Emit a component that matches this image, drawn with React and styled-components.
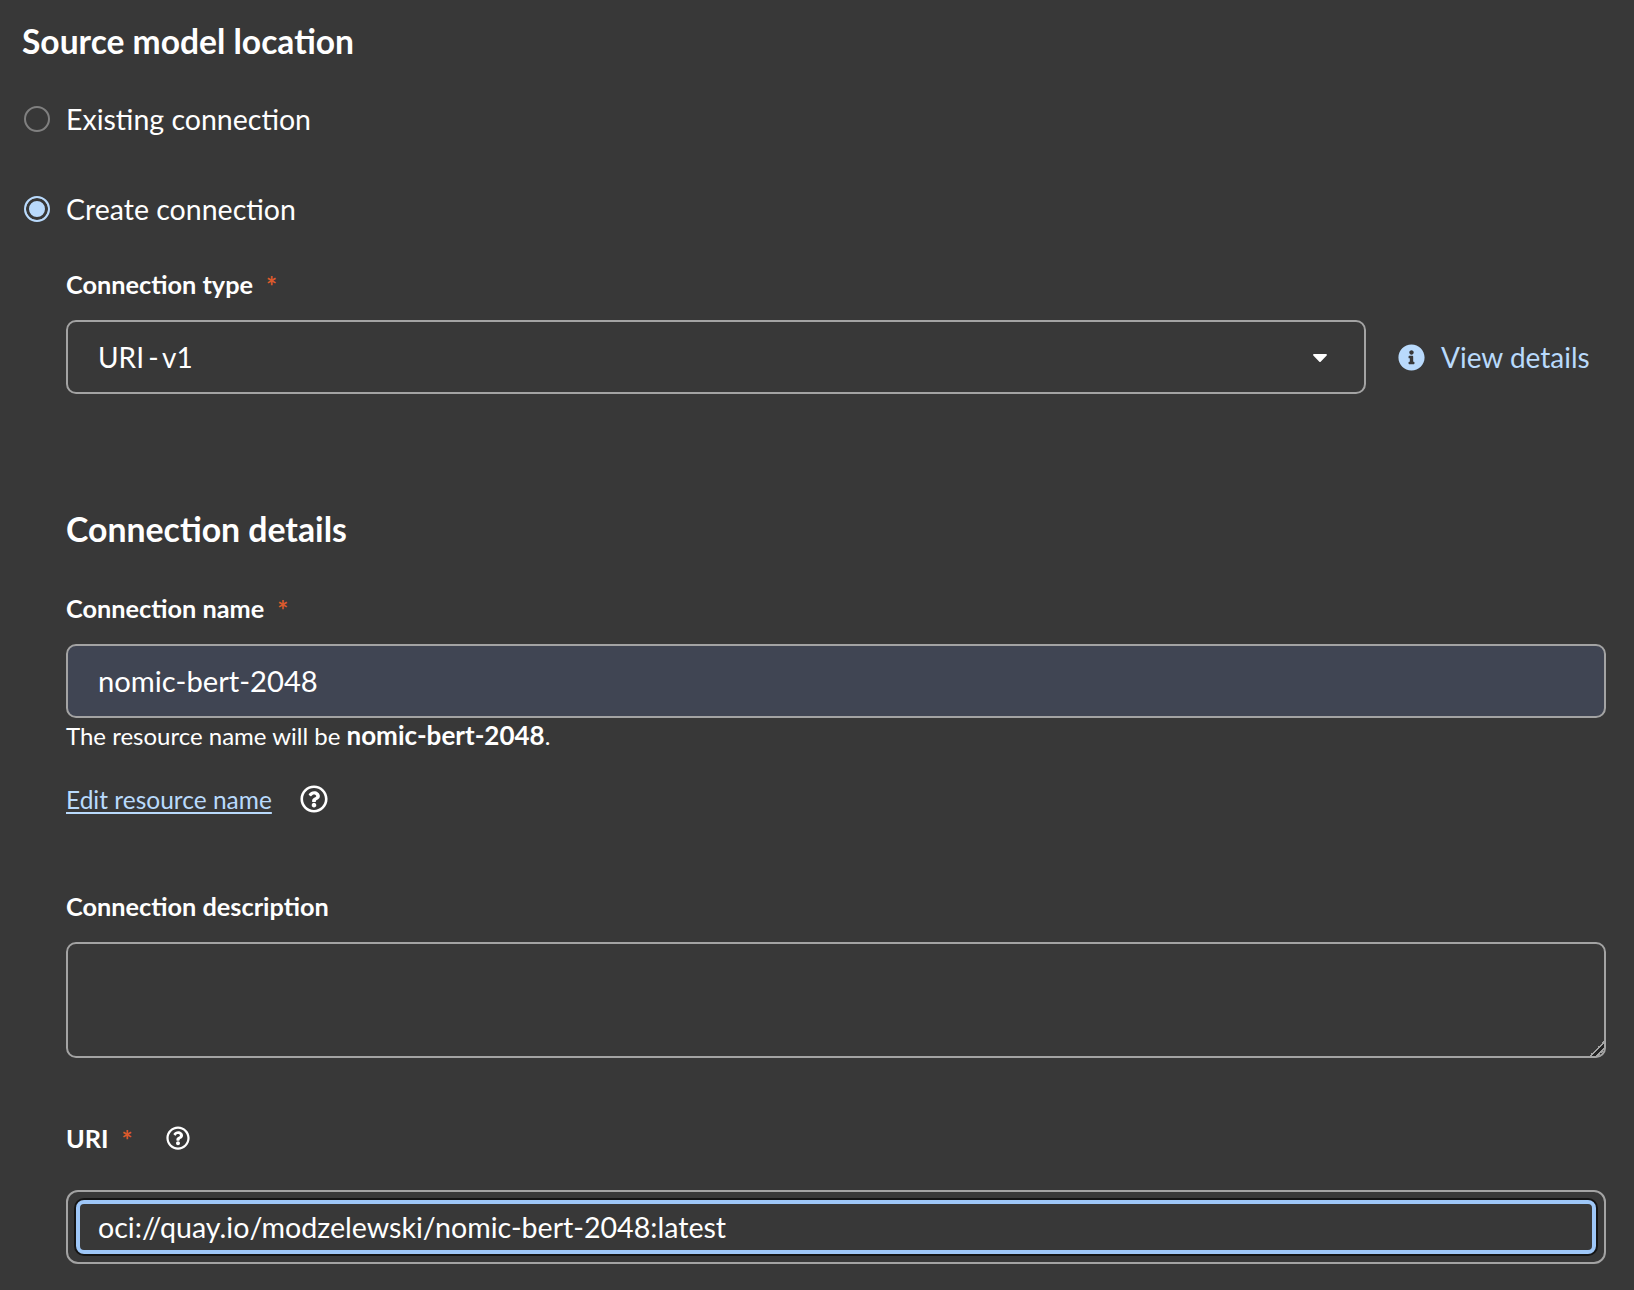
import React from "react";
import styled, { createGlobalStyle } from "styled-components";
import { FaInfoCircle, FaRegQuestionCircle, FaCaretDown } from "react-icons/fa";

const GlobalStyle = createGlobalStyle`
  html, body {
    margin: 0;
    background: #383838;
    color-scheme: dark;
  }
  body {
    font-family: "Lato", "Noto Sans", sans-serif;
    color: #fff;
  }
`;

const Page = styled.div`
  height: 1290px;
  overflow: hidden;
  padding: 19px 28px 0 22px;
  box-sizing: border-box;
`;

const Title = styled.h2`
  margin: 0 0 36px;
  font-size: 33.6px;
  line-height: 44px;
  font-weight: 700;
`;

const RadioRow = styled.label`
  display: flex;
  align-items: center;
  height: 40px;
  gap: 16px;
  font-size: 28.5px;
  margin-bottom: ${(p) => p.$mb || 0}px;
`;

const RadioDot = styled.span`
  width: 26px;
  height: 26px;
  margin-left: 2px;
  box-sizing: border-box;
  border-radius: 50%;
  border: 2px solid ${(p) => (p.$checked ? "#b9dafc" : "#808080")};
  background: ${(p) => (p.$checked ? "#b9dafc" : "transparent")};
  box-shadow: ${(p) => (p.$checked ? "inset 0 0 0 3px #383838" : "none")};
`;

const Indent = styled.div`
  padding-left: 44px;
`;

const Label = styled.div`
  display: flex;
  align-items: center;
  height: 30px;
  font-size: 25.3px;
  font-weight: 700;
  margin-top: ${(p) => p.$mt || 0}px;
  margin-bottom: ${(p) => p.$mb || 0}px;
`;

const Star = styled.span`
  color: #dc5a2c;
  font-size: 26px;
  font-weight: 700;
  margin-left: 13px;
  position: relative;
  top: 2px;
`;

const HelpIcon = styled(FaRegQuestionCircle)`
  font-size: ${(p) => p.$size}px;
  margin-left: ${(p) => p.$ml}px;
  color: #fff;
`;

const SelectRow = styled.div`
  display: flex;
  align-items: center;
  gap: 32px;
`;

const SelectBox = styled.div`
  flex: 0 0 1300px;
  height: 74px;
  box-sizing: border-box;
  display: flex;
  align-items: center;
  justify-content: space-between;
  padding: 0 32px 0 30px;
  border: 2px solid #a3a3a3;
  border-radius: 10px;
  font-size: 28px;
  word-spacing: -3px;
`;

const ViewDetails = styled.a`
  display: flex;
  align-items: center;
  gap: 16px;
  color: #b9dafc;
  font-size: 28px;
  white-space: nowrap;
`;

const Heading = styled.h3`
  margin: 113px 0 0;
  font-size: 33.8px;
  line-height: 44px;
  font-weight: 700;
`;

const TextInput = styled.input`
  display: block;
  width: 100%;
  height: 74px;
  box-sizing: border-box;
  padding: 0 30px 2px;
  border: 2px solid #a3a3a3;
  border-radius: 10px;
  background: #404553;
  color: #fff;
  font: inherit;
  font-size: 29.2px;
  outline: none;
`;

const Helper = styled.div`
  margin-top: 2px;
  height: 30px;
  line-height: 30px;
  font-size: 24px;
  b {
    font-size: 26px;
    font-weight: 700;
  }
`;

const LinkRow = styled.div`
  display: flex;
  align-items: center;
  height: 30px;
  margin-top: 34px;
`;

const EditLink = styled.a`
  color: #b9dafc;
  font-size: 24.5px;
  text-decoration: underline;
  text-underline-offset: 3px;
`;

const TextArea = styled.textarea`
  display: block;
  width: 100%;
  height: 116px;
  box-sizing: border-box;
  padding: 10px 30px;
  border: 2px solid #a3a3a3;
  border-radius: 10px;
  background: transparent;
  color: #fff;
  font: inherit;
  outline: none;

  &::-webkit-resizer {
    background: linear-gradient(
      135deg,
      transparent 50%,
      #a3a3a3 50%,
      #a3a3a3 58%,
      #222 58%,
      #222 72%,
      #a3a3a3 72%,
      #a3a3a3 80%,
      transparent 80%
    );
  }
`;

const FocusWrap = styled.div`
  height: 74px;
  box-sizing: border-box;
  padding: 8px;
  border: 2px solid #a3a3a3;
  border-radius: 12px;
`;

const FocusInput = styled.input`
  display: block;
  width: 100%;
  height: 54px;
  box-sizing: border-box;
  padding: 0 18px;
  border: 4px solid #9ec7f8;
  border-radius: 8px;
  box-shadow: 0 0 0 2px #151515;
  background: #383838;
  color: #fff;
  font: inherit;
  font-size: 28.6px;
  outline: none;
`;

export default function App() {
  return (
    <Page>
      <GlobalStyle />
      <Title>Source model location</Title>
      <RadioRow $mb={50}>
        <RadioDot />
        Existing connection
      </RadioRow>
      <RadioRow>
        <RadioDot $checked />
        Create connection
      </RadioRow>
      <Indent>
        <Label $mt={40} $mb={21}>
          Connection type<Star>*</Star>
        </Label>
        <SelectRow>
          <SelectBox>
            URI - v1
            <FaCaretDown size={24} />
          </SelectBox>
          <ViewDetails>
            <FaInfoCircle size={27} />
            View details
          </ViewDetails>
        </SelectRow>

        <Heading>Connection details</Heading>
        <Label $mt={42} $mb={21}>
          Connection name<Star>*</Star>
        </Label>
        <TextInput readOnly value="nomic-bert-2048" />
        <Helper>
          The resource name will be <b>nomic-bert-2048</b>.
        </Helper>
        <LinkRow>
          <EditLink href="#">Edit resource name</EditLink>
          <HelpIcon $size={28} $ml={28} />
        </LinkRow>

        <Label $mt={77} $mb={21}>
          Connection description
        </Label>
        <TextArea readOnly />

        <Label $mt={65} $mb={37}>
          URI<Star>*</Star>
          <HelpIcon $size={24} $ml={33} />
        </Label>
        <FocusWrap>
          <FocusInput
            readOnly
            value="oci://quay.io/modzelewski/nomic-bert-2048:latest"
          />
        </FocusWrap>
      </Indent>
    </Page>
  );
}
